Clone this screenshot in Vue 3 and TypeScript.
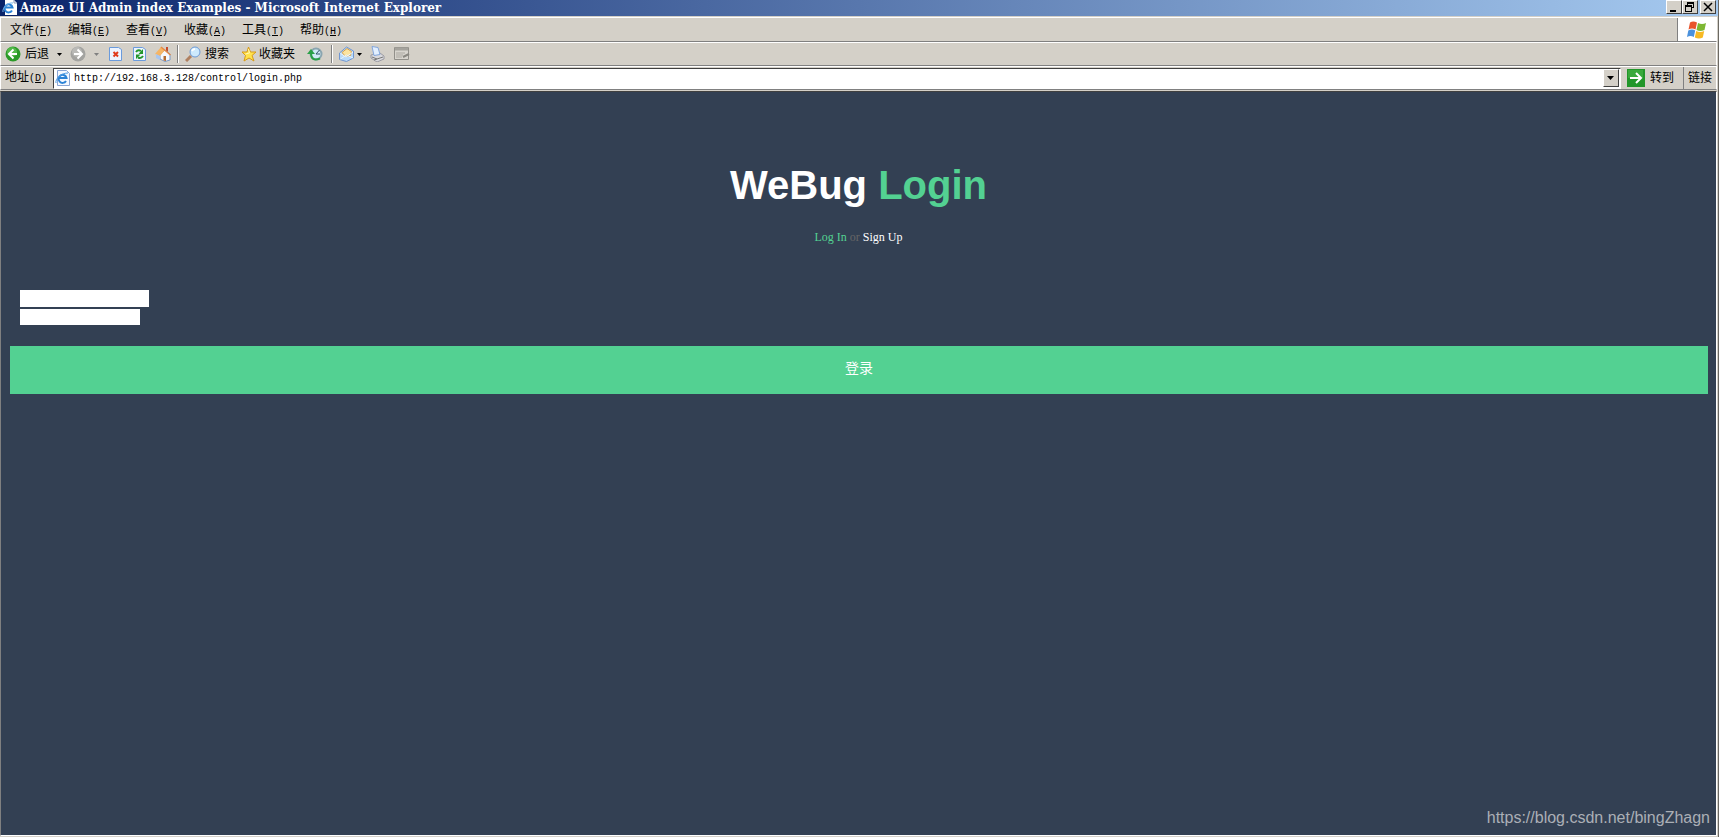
<script setup lang="ts">
import { ref } from 'vue'

interface MenuItem {
  label: string
  key: string
}

const menus: MenuItem[] = [
  { label: '文件', key: 'F' },
  { label: '编辑', key: 'E' },
  { label: '查看', key: 'V' },
  { label: '收藏', key: 'A' },
  { label: '工具', key: 'T' },
  { label: '帮助', key: 'H' },
]

const address = ref('http://192.168.3.128/control/login.php')
const user = ref('')
const password = ref('')
</script>

<template>
  <div class="window">
    <header class="titlebar">
      <svg class="i16" viewBox="0 0 16 16" aria-hidden="true">
        <path d="M3 0h9l3 3v12H3z" fill="#fff" />
        <path d="M12 0v3h3" fill="none" stroke="#8a98b8" />
        <path d="M10 10.5A4 4 0 1 1 10.500 7.500H3.500" fill="none" stroke="#2b83d6" stroke-width="2" />
        <path d="M1 12C0 8 6 2 11 3" fill="none" stroke="#79b8ee" />
      </svg>
      <span class="caption">Amaze UI Admin index Examples - Microsoft Internet Explorer</span>
      <div class="controls">
        <button class="ctl" type="button" aria-label="Minimize">
          <svg viewBox="0 0 14 12"><path d="M3 9h6v2H3z" /></svg>
        </button>
        <button class="ctl" type="button" aria-label="Restore">
          <svg viewBox="0 0 14 12"><path d="M4 1h7v6H9V6h1V3H5v1H4zM2 4h7v7H2zm1 2v4h5V6z" fill-rule="evenodd" /></svg>
        </button>
        <button class="ctl close" type="button" aria-label="Close">
          <svg viewBox="0 0 14 12"><path d="M3 2l8 8M11 2l-8 8" stroke="#000" stroke-width="1.500" /></svg>
        </button>
      </div>
    </header>

    <nav class="bar menubar">
      <button v-for="m in menus" :key="m.key" class="menu" type="button">
        {{ m.label }}<span class="mono">(<u>{{ m.key }}</u>)</span>
      </button>
      <div class="brand">
        <svg viewBox="0 0 20 18" aria-hidden="true">
          <path d="M3 1.500Q6-.5 10 1.500L8.500 8.500Q5 6.500 1.500 8.500z" fill="#e8542c" />
          <path d="M11 2Q15 4 19 2L17.500 9Q13 11 9.500 9z" fill="#7db733" />
          <path d="M1.300 9.500Q5 7.500 8.200 9.500L6.800 16Q3.500 14 0 16z" fill="#4b91dc" />
          <path d="M9.200 10Q13 12 17.200 10L15.800 16.500Q12 18.500 7.800 16.500z" fill="#f7b923" />
        </svg>
      </div>
    </nav>

    <div class="bar toolbar">
      <button class="tool" type="button">
        <svg class="i16" viewBox="0 0 16 16" aria-hidden="true">
          <circle cx="8" cy="8" r="7.500" fill="#2b9a28" />
          <circle cx="7" cy="6" r="5" fill="#63c455" opacity=".7" />
          <path d="M8.500 3.500L4 8l4.500 4.500M4.500 8H12" fill="none" stroke="#fff" stroke-width="2" />
        </svg>
        后退
      </button>
      <button class="drop" type="button" aria-label="后退列表"><svg viewBox="0 0 5 3"><path d="M0 0h5L2.500 3z" /></svg></button>
      <button class="tool" type="button" aria-label="前进">
        <svg class="i16" viewBox="0 0 16 16">
          <circle cx="8" cy="8" r="7.500" fill="#a3a3a0" />
          <circle cx="7" cy="6" r="5" fill="#c3c3c0" opacity=".7" />
          <path d="M7.500 3.500L12 8l-4.500 4.500M11.500 8H4" fill="none" stroke="#fff" stroke-width="2" />
        </svg>
      </button>
      <button class="drop dim" type="button" aria-label="前进列表"><svg viewBox="0 0 5 3"><path d="M0 0h5L2.500 3z" /></svg></button>
      <div class="group">
        <button class="tool" type="button" aria-label="停止">
          <svg class="i16" viewBox="0 0 16 16">
            <path d="M2.500 1.500h9l3 2v11h-12z" fill="#edf4ff" stroke="#6b9bdc" />
            <path d="M6.500 6l4.500 4.500M11 6l-4.500 4.500" stroke="#e03a1c" stroke-width="2" />
          </svg>
        </button>
        <button class="tool" type="button" aria-label="刷新">
          <svg class="i16" viewBox="0 0 16 16">
            <path d="M2.500 1.500h9l3 2v11h-12z" fill="#edf4ff" stroke="#6b9bdc" />
            <path d="M5 6Q7 3 10 5M12 10Q10 13 7 11.500" fill="none" stroke="#22962a" stroke-width="2" />
            <path d="M12 3v5H7.500zM5 13V8.500h4.500z" fill="#22962a" />
          </svg>
        </button>
        <button class="tool" type="button" aria-label="主页">
          <svg class="i16" viewBox="0 0 16 16">
            <path d="M11 1h2v5h-2z" fill="#c74b2c" />
            <path d="M5 8l5-4 5 4v6l-5 1.500L5 13z" fill="#f6f9ff" stroke="#7899c7" />
            <path d="M0 8l6-7 4 3-5 6z" fill="#f6b565" />
            <path d="M6 1l9.500 8" stroke="#e58a45" stroke-width="1.500" />
            <path d="M1 8l4 2v4l-4-2z" fill="#a9c6f0" />
            <path d="M8.500 10H11v5l-2.500-.5z" fill="#b56b2f" />
          </svg>
        </button>
      </div>
      <i class="sep"></i>
      <button class="tool" type="button">
        <svg class="i16" viewBox="0 0 16 16" aria-hidden="true">
          <path d="M6 10l-5 5" stroke="#b08060" stroke-width="3" />
          <circle cx="10" cy="6" r="5" fill="#cdeafd" stroke="#6d9ad6" stroke-width="1" />
          <path d="M7 5q1-2 3-2" fill="none" stroke="#fff" stroke-width="2" />
        </svg>
        搜索
      </button>
      <button class="tool fav" type="button">
        <svg class="i16" viewBox="0 0 16 16" aria-hidden="true">
          <path d="M7.500 1l2 5H15l-4 3.500 2 5.500-5-3-5 3 1.500-5.500L1 6h5z" fill="#ffe34c" stroke="#d79a18" />
          <path d="M7.500 3l1 4-4 1" fill="none" stroke="#fff8b4" />
        </svg>
        收藏夹
      </button>
      <button class="tool hist" type="button" aria-label="历史">
        <svg class="i16" viewBox="0 0 16 16">
          <circle cx="9" cy="8" r="5.500" fill="#cfeaf5" stroke="#8aa5b0" stroke-width="2" />
          <path d="M12.500 4L9 8h4" fill="none" stroke="#31566b" />
          <path d="M13 12.500Q4 16 4 7" fill="none" stroke="#29a047" stroke-width="2" />
          <path d="M0 8l4-5 4 5z" fill="#29a047" />
        </svg>
      </button>
      <i class="sep"></i>
      <button class="tool" type="button" aria-label="邮件">
        <svg class="i16" viewBox="0 0 16 16">
          <path d="M.5 7l7-6 7 4v7l-7 3.500-7-2z" fill="#b8daf9" stroke="#7196d0" />
          <path d="M3 6.500l5-4 4.500 3-1 4-5 1z" fill="#fbe4a0" stroke="#d9a048" />
          <path d="M1.500 13l6-4 6.500 3M1.500 7.500l5.500 3.500 7-5" fill="none" stroke="#e9f6ff" />
        </svg>
      </button>
      <button class="drop near" type="button" aria-label="邮件列表"><svg viewBox="0 0 5 3"><path d="M0 0h5L2.500 3z" /></svg></button>
      <button class="tool" type="button" aria-label="打印">
        <svg class="i16" viewBox="0 0 16 16">
          <path d="M1 9l9-2 4 3v3l-7 3-6-4z" fill="#d9d9dd" stroke="#9a9aa2" />
          <path d="M2 .5l6 1 2 7-6 1z" fill="#e2efff" stroke="#83a6dc" />
          <path d="M2 11l5 2 6-2M4 14l3-1" fill="none" stroke="#777" />
        </svg>
      </button>
      <button class="tool edit" type="button" aria-label="编辑">
        <svg class="i16" viewBox="0 0 16 16">
          <path d="M.5 1.500h14v12H.5z" fill="#d8d5ce" stroke="#92908a" />
          <path d="M1 3h13" stroke="#a5a39d" stroke-width="3" />
          <path d="M2 7h9M2 9h7M2 11h6" stroke="#aaa7a0" />
          <path d="M9 11l6-3" stroke="#8a8882" stroke-width="2" />
        </svg>
      </button>
    </div>

    <form class="bar addressbar" @submit.prevent>
      <label class="addr-label" for="address">地址<span class="mono">(<u>D</u>)</span></label>
      <div class="field">
        <svg class="i16" viewBox="0 0 16 16" aria-hidden="true">
          <path d="M2.500.5h9l3 3v12h-12z" fill="#f5f9ff" stroke="#8aa6d5" />
          <path d="M11 11A4 4 0 1 1 11.500 8H4.500" fill="none" stroke="#2b83d6" stroke-width="2" />
          <path d="M1 13C0 9 6 3 13 3" fill="none" stroke="#4b9be4" />
        </svg>
        <input id="address" v-model="address" class="url" type="text" spellcheck="false" />
        <button class="open" type="button" aria-label="地址列表"><svg viewBox="0 0 7 4"><path d="M0 0h7L3.500 4z" /></svg></button>
      </div>
      <button class="go" type="submit">
        <svg viewBox="0 0 18 18" aria-hidden="true">
          <path d="M0 0h18v18H0z" fill="#22962a" />
          <path d="M1 1h15v8H1z" fill="#49b54a" opacity=".6" />
          <path d="M9 4l5 5-5 5M13 9H3" fill="none" stroke="#fff" stroke-width="2" />
        </svg>
        转到
      </button>
      <a class="links" href="#">链接</a>
    </form>

    <main class="page">
      <h1>WeBug <span>Login</span></h1>
      <p class="switch"><a class="on" href="#">Log In</a> or <a href="#">Sign Up</a></p>
      <form class="login" @submit.prevent>
        <input v-model="user" class="name" type="text" aria-label="Username" />
        <input v-model="password" class="pass" type="password" aria-label="Password" />
        <button class="submit" type="submit">登录</button>
      </form>
      <span class="watermark">https://blog.csdn.net/bingZhagn</span>
    </main>
  </div>
</template>

<style>
body {
  margin: 0;
  background: #d4d0c8;
}
</style>

<style scoped>
.window {
  box-sizing: border-box;
  min-height: 100vh;
  display: flex;
  flex-direction: column;
  border-right: 1px solid #6b6963;
  background: #d4d0c8;
  color: #000;
  font: 12px/16px "Liberation Sans", "Noto Sans CJK SC", sans-serif;
}
button,
input {
  box-sizing: border-box;
  margin: 0;
  padding: 0;
  border: 0;
  border-radius: 0;
  background: none;
  color: inherit;
  font: inherit;
}
svg {
  display: block;
  flex: none;
}
.i16 {
  width: 16px;
  height: 16px;
}
.mono {
  font: 10px/16px "Liberation Mono", monospace;
}
.titlebar {
  display: flex;
  align-items: center;
  height: 16px;
  padding-left: 2px;
  overflow: hidden;
  background: linear-gradient(90deg, #0a246a, #a6caf0);
}
.caption {
  flex: 1;
  padding-left: 2px;
  color: #fff;
  font: bold 12px/14px "DejaVu Serif", serif;
  white-space: nowrap;
}
.controls {
  display: flex;
  align-self: flex-start;
  padding-right: 2px;
}
.ctl {
  width: 16px;
  height: 14px;
  border: 1px solid;
  border-color: #fff #404040 #404040 #fff;
  background: #d4d0c8;
}
.ctl svg {
  width: 14px;
  height: 12px;
}
.close {
  margin-left: 2px;
}
.bar {
  box-sizing: border-box;
  display: flex;
  align-items: center;
  height: 24px;
  margin-right: 1px;
  border: 1px solid;
  border-color: #fff #fff #808080 #fff;
  padding-left: 4px;
}
.menubar {
  align-items: stretch;
  height: 25px;
  margin-top: 1px;
  padding-left: 1px;
}
.menu {
  width: 58px;
  padding-top: 2px;
  white-space: nowrap;
}
.brand {
  display: flex;
  align-items: center;
  justify-content: center;
  width: 38px;
  margin-left: auto;
  border-left: 1px solid #808080;
  background: #fff;
}
.brand svg {
  width: 20px;
  height: 18px;
}
.tool {
  display: flex;
  align-items: center;
  gap: 4px;
  white-space: nowrap;
}
.drop {
  display: flex;
  align-items: center;
  justify-content: center;
  width: 21px;
  height: 16px;
}
.drop svg {
  width: 5px;
  height: 3px;
}
.drop.dim {
  fill: #808080;
}
.drop.near {
  justify-content: flex-start;
  width: 15px;
  padding-left: 2px;
}
.group {
  display: flex;
  gap: 8px;
}
.sep {
  flex: none;
  height: 18px;
  margin: 0 6px;
  border-left: 1px solid #808080;
  border-right: 1px solid #fff;
}
.fav {
  gap: 2px;
  margin-left: 12px;
}
.hist {
  margin: 0 2px 0 12px;
}
.edit {
  margin-left: 8px;
}
.addr-label {
  width: 48px;
  white-space: nowrap;
}
.field {
  box-sizing: border-box;
  display: flex;
  flex: 1;
  align-items: center;
  height: 21px;
  padding: 0 1px;
  border: 1px solid;
  border-color: #404040 #fff #fff #404040;
  background: #fff;
}
.url {
  flex: 1;
  height: 18px;
  padding: 1px 0 0 3px;
  font: 10px/16px "Liberation Mono", monospace;
  outline: 0;
}
.open {
  display: flex;
  align-items: center;
  justify-content: center;
  width: 16px;
  height: 18px;
  border: 1px solid;
  border-color: #fff #404040 #404040 #fff;
  background: #d4d0c8;
}
.open svg {
  width: 7px;
  height: 4px;
}
.go {
  display: flex;
  align-items: center;
  gap: 5px;
  width: 56px;
  height: 22px;
  margin-left: 6px;
}
.go svg {
  width: 18px;
  height: 18px;
}
.links {
  display: flex;
  align-items: center;
  height: 22px;
  padding: 0 4px;
  border-left: 1px solid #808080;
  color: #000;
  text-decoration: none;
  white-space: nowrap;
}
.page {
  position: relative;
  flex: 1;
  margin: 1px 1px 1px 0;
  border: 1px solid;
  border-color: #404040 #fff #fff #808080;
  background: #334053;
}
h1 {
  margin: 0;
  padding-top: 69px;
  color: #fff;
  font: bold 40px/48px "Liberation Sans", sans-serif;
  text-align: center;
}
h1 span {
  color: #53d192;
}
.switch {
  margin: 20px 0 0;
  color: #666;
  font: 12px/16px "Liberation Serif", serif;
  text-align: center;
}
.switch a {
  color: #fff;
  text-decoration: none;
}
.switch .on {
  color: #53d192;
}
.login {
  display: flex;
  flex-direction: column;
  align-items: flex-start;
  gap: 2px;
  padding: 45px 8px 0 9px;
}
.name,
.pass {
  height: 17px;
  margin-left: 10px;
  background: #fff;
  color: #000;
}
.name {
  width: 129px;
}
.pass {
  width: 120px;
  height: 16px;
}
.submit {
  align-self: stretch;
  height: 48px;
  margin-top: 19px;
  padding-bottom: 4px;
  background: #53d192;
  color: #fff;
  font-size: 14px;
}
.watermark {
  position: absolute;
  right: 6px;
  bottom: 7px;
  color: #abafb6;
  font: 16px/20px "Liberation Sans", sans-serif;
}
</style>
